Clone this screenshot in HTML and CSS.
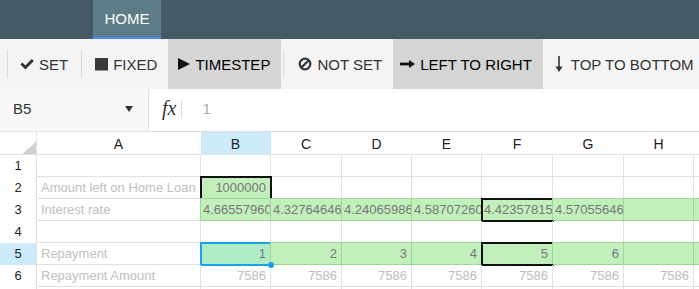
FILE: index.html
```html
<!DOCTYPE html>
<html lang="en">
<head>
  <meta charset="UTF-8">
  <title>Spreadsheet</title>
  <link rel="stylesheet" href="styles.css">
</head>
<body>
  <!-- Ribbon tabs -->
  <div class="ribbon-tabs">
    <div class="tab active">HOME</div>
  </div>

  <!-- Toolbar -->
  <div class="toolbar">
    <span class="sep"></span>
    <button class="tool">
      <svg class="icon" width="14" height="11" viewBox="0 0 14 11"><path d="M0.4 5.6 L2.5 3.5 L5.4 6.4 L11.8 0 L13.9 2.1 L5.4 10.6 Z" fill="#333"/></svg>
      SET
    </button>
    <span class="sep"></span>
    <button class="tool">
      <svg class="icon" width="14" height="13" viewBox="0 0 14 13"><rect x="1" y="0" width="13" height="12.5" fill="#3a3a3a"/></svg>
      FIXED
    </button>
    <button class="tool active">
      <svg class="icon icon-play" width="12" height="12" viewBox="0 0 12 12"><path d="M0 0 L12 6 L0 12 Z" fill="#111"/></svg>
      TIMESTEP
    </button>
    <span class="sep"></span>
    <button class="tool">
      <svg class="icon icon-ban" width="14" height="14" viewBox="0 0 14 14"><circle cx="7" cy="7" r="5.3" fill="none" stroke="#333" stroke-width="2.2"/><path d="M10.8 3.2 L3.2 10.8" stroke="#333" stroke-width="2.2"/></svg>
      NOT SET
    </button>
    <button class="tool active">
      <svg class="icon icon-right" width="15" height="8" viewBox="0 0 15 8"><rect x="0" y="2.6" width="10" height="2.8" fill="#111"/><path d="M9 0 L15 4 L9 8 Z" fill="#111"/></svg>
      LEFT TO RIGHT
    </button>
    <button class="tool">
      <svg class="icon icon-down" width="8" height="16" viewBox="0 0 8 16"><rect x="3.2" y="0" width="1.6" height="12" fill="#333"/><path d="M0.5 10.5 L7.5 10.5 L4 16 Z" fill="#333"/></svg>
      TOP TO BOTTOM
    </button>
  </div>

  <!-- Formula bar -->
  <div class="formula-bar">
    <div class="name-box">
      <span>B5</span>
      <span class="caret"></span>
    </div>
    <span class="fx">fx</span>
    <span class="fx-sep"></span>
    <span class="formula-value">1</span>
  </div>

  <!-- Sheet -->
  <div class="sheet">
    <div class="c corner"><span class="corner-mark"></span></div>
    <div class="c ch">A</div>
    <div class="c ch hl">B</div>
    <div class="c ch">C</div>
    <div class="c ch">D</div>
    <div class="c ch">E</div>
    <div class="c ch">F</div>
    <div class="c ch">G</div>
    <div class="c ch">H</div>
    <div class="c ch"></div>

    <div class="c rh">1</div>
    <div class="c"></div><div class="c"></div><div class="c"></div><div class="c"></div>
    <div class="c"></div><div class="c"></div><div class="c"></div><div class="c"></div><div class="c"></div>

    <div class="c rh">2</div>
    <div class="c lbl">Amount left on Home Loan</div>
    <div class="c g num val box">1000000</div>
    <div class="c"></div><div class="c"></div><div class="c"></div>
    <div class="c"></div><div class="c"></div><div class="c"></div><div class="c"></div>

    <div class="c rh">3</div>
    <div class="c lbl">Interest rate</div>
    <div class="c g val clip">4.665579604</div>
    <div class="c g val clip">4.327646461</div>
    <div class="c g val clip">4.240659862</div>
    <div class="c g val clip">4.587072601</div>
    <div class="c g val clip box">4.423578153</div>
    <div class="c g val clip">4.570556468</div>
    <div class="c g"></div>
    <div class="c g"></div>

    <div class="c rh">4</div>
    <div class="c"></div><div class="c"></div><div class="c"></div><div class="c"></div>
    <div class="c"></div><div class="c"></div><div class="c"></div><div class="c"></div><div class="c"></div>

    <div class="c rh hl">5</div>
    <div class="c lbl">Repayment</div>
    <div class="c g num val sel">1<span class="handle"></span></div>
    <div class="c g num val">2</div>
    <div class="c g num val">3</div>
    <div class="c g num val">4</div>
    <div class="c g num val box">5</div>
    <div class="c g num val">6</div>
    <div class="c g"></div>
    <div class="c g"></div>

    <div class="c rh">6</div>
    <div class="c lbl">Repayment Amount</div>
    <div class="c num faint">7586</div>
    <div class="c num faint">7586</div>
    <div class="c num faint">7586</div>
    <div class="c num faint">7586</div>
    <div class="c num faint">7586</div>
    <div class="c num faint">7586</div>
    <div class="c num faint">7586</div>
    <div class="c"></div>

    <div class="c rh">7</div>
    <div class="c"></div><div class="c"></div><div class="c"></div><div class="c"></div>
    <div class="c"></div><div class="c"></div><div class="c"></div><div class="c"></div><div class="c"></div>
  </div>
</body>
</html>
```

FILE: styles.css
```css
body {
  margin: 0;
  font-family: "Liberation Sans", Arial, sans-serif;
  background-color: #fff;
  overflow: hidden;
}

/* Ribbon tabs */
.ribbon-tabs {
  display: flex;
  height: 39px;
  padding-left: 93px;
  background-color: #465a65;
}

.tab {
  display: flex;
  align-items: center;
  justify-content: center;
  width: 68px;
  box-sizing: border-box;
  color: #fff;
  font-size: 15px;
}

.tab.active {
  background-color: #5e7b88;
  border-bottom: 2px solid #3d8ff7;
}

/* Toolbar */
.toolbar {
  display: flex;
  height: 50px;
  background-color: #f4f4f4;
  overflow: hidden;
}

.sep {
  flex-shrink: 0;
  width: 1px;
  margin: 11px 1px 11px 2px;
  background-color: #d9d9d9;
}

.sep:first-child {
  margin-left: 7px;
}

.tool {
  display: flex;
  flex-shrink: 0;
  align-items: center;
  gap: 5px;
  padding: 0 11px;
  border: none;
  background: none;
  font-family: "Liberation Sans", Arial, sans-serif;
  font-size: 15px;
  color: #333;
  white-space: nowrap;
}

.tool.active {
  background-color: #d5d5d5;
  color: #000;
}

.icon-play {
  margin-left: -1px;
}

.icon-ban {
  margin-left: 2px;
}

.icon-right {
  margin-left: -4px;
}

.icon-down {
  margin: 0 3px 0 1px;
}

/* Formula bar */
.formula-bar {
  display: flex;
  align-items: center;
  height: 43px;
  box-sizing: border-box;
  border-bottom: 1px solid #e0e0e0;
}

.name-box {
  display: flex;
  align-items: center;
  justify-content: space-between;
  width: 149px;
  height: 100%;
  box-sizing: border-box;
  padding: 0 15px 3px 13px;
  background-color: #f8f8f8;
  border-right: 1px solid #e0e0e0;
  font-size: 15px;
  color: #333;
}

.caret {
  width: 0;
  height: 0;
  border-left: 4px solid transparent;
  border-right: 4px solid transparent;
  border-top: 6px solid #333;
}

.fx {
  margin: 0 5px 3px 13px;
  font-family: "Liberation Serif", "Times New Roman", serif;
  font-style: italic;
  font-size: 20px;
  color: #333;
}

.fx-sep {
  width: 1px;
  height: 18px;
  margin-bottom: 3px;
  background-color: #ddd;
}

.formula-value {
  margin: 0 0 3px 20px;
  font-size: 15px;
  color: #aaa;
}

/* Sheet grid */
.sheet {
  display: grid;
  grid-template-columns: 37px 164px 70px 71px 70px 70px 71px 71px 70px 1fr;
  grid-template-rows: 23px;
  grid-auto-rows: 22px;
  font-size: 13px;
}

.c {
  position: relative;
  box-sizing: border-box;
  padding: 0 4px;
  border-right: 1px solid #e1e1e1;
  border-bottom: 1px solid #e1e1e1;
  line-height: 22px;
  white-space: nowrap;
  overflow: hidden;
}

.corner {
  display: flex;
  justify-content: flex-end;
  align-items: flex-end;
  padding: 0;
}

.corner-mark {
  width: 14px;
  height: 12px;
  background: linear-gradient(to top left, #cfcfcf 50%, transparent 50%);
}

.ch {
  border-right-color: transparent;
  text-align: center;
  font-size: 14px;
  line-height: 24px;
  color: #222;
}

.rh {
  border-bottom-color: transparent;
  text-align: center;
  color: #222;
}

.hl {
  background-color: #cdeafb;
}

.lbl {
  color: #c0c0c0;
}

.num {
  text-align: right;
}

.val {
  color: #777;
}

.clip {
  padding: 0 0 0 2px;
  text-overflow: clip;
}

.faint {
  color: #bdbdbd;
}

.g {
  background-color: #c2f0bd;
  border-color: #9dd796;
  box-shadow: -1px -1px 0 #9dd796;
}

.box {
  outline: 2px solid #111;
  outline-offset: -1px;
}

.sel {
  overflow: visible;
  background-color: #aeedc3;
  outline: 2px solid #17a2ea;
  outline-offset: -1px;
}

.handle {
  position: absolute;
  right: -4px;
  bottom: -4px;
  width: 6px;
  height: 6px;
  border-radius: 50%;
  background-color: #1a9cf0;
  z-index: 2;
}
```
